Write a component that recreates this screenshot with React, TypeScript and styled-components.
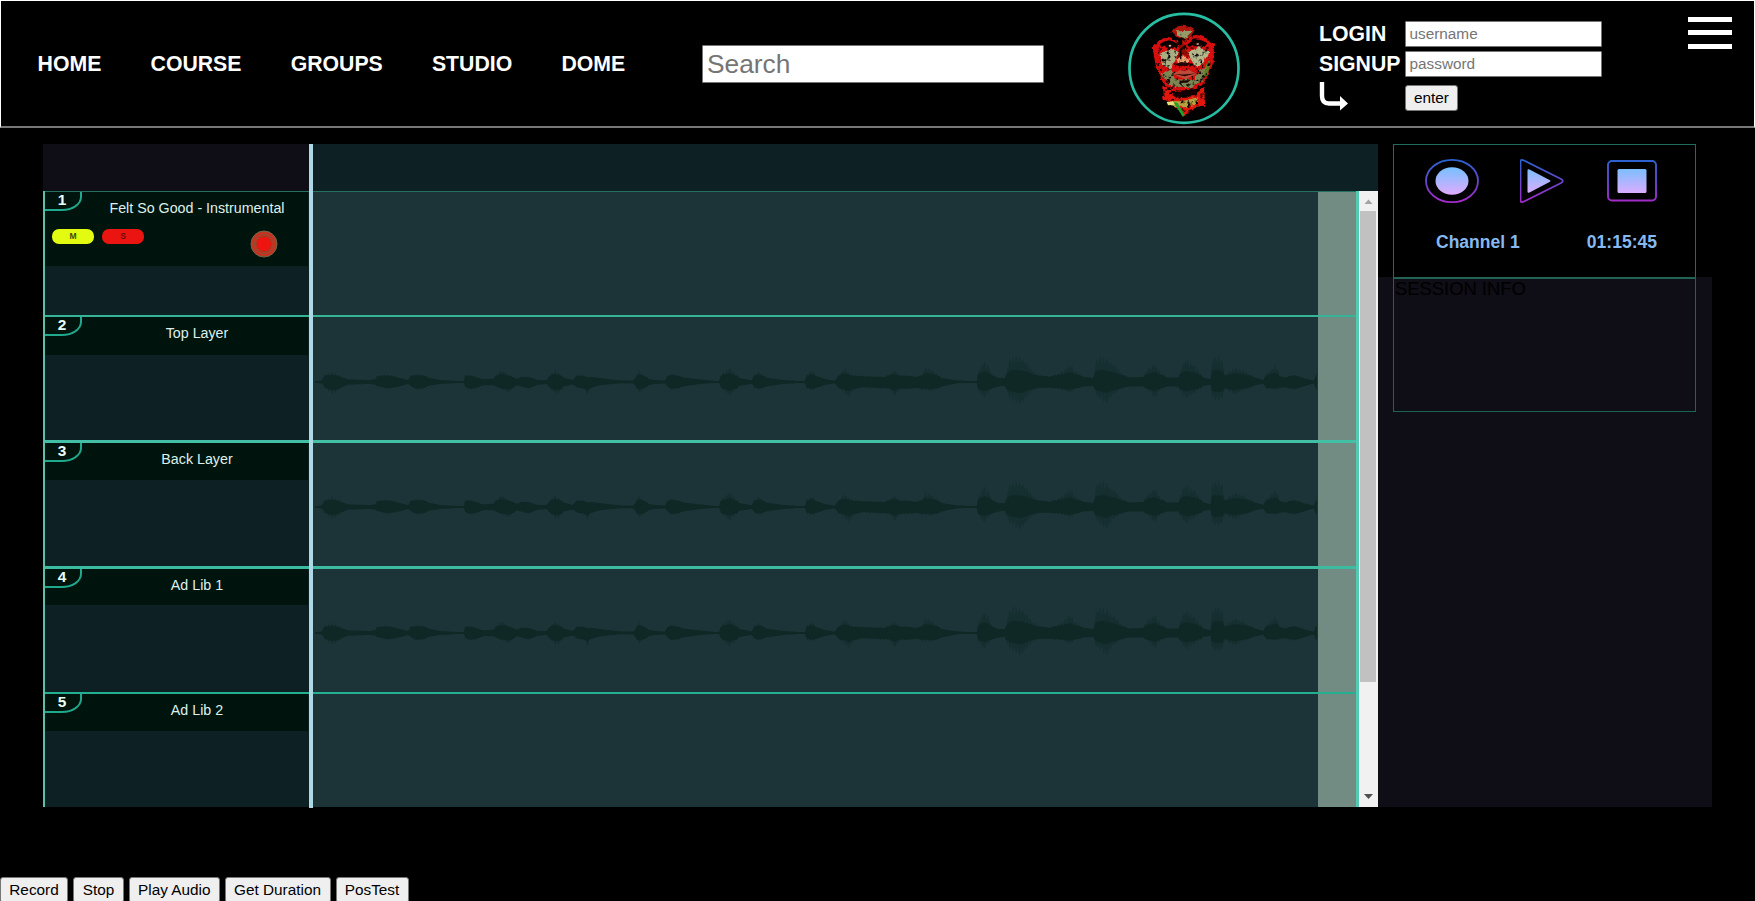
import React from "react";
import styled, { createGlobalStyle } from "styled-components";

const GlobalStyle = createGlobalStyle`
  html, body { margin: 0; background: #000; overflow: hidden; }
  body, input, button { font-family: "Liberation Sans", Arial, sans-serif; }
  * { box-sizing: border-box; }
`;

const Page = styled.div`
  width: 1755px;
  height: 901px;
  overflow: hidden;
  background: #000;
  display: flex;
  flex-direction: column;
`;

/* ---------- header ---------- */

const Header = styled.header`
  flex: none;
  height: 128px;
  border: 1px solid #fff;
  border-bottom: 2px solid #777;
  display: flex;
  align-items: flex-start;
`;

const Nav = styled.nav`
  display: flex;
  gap: 49.2px;
  width: 665px;
  padding: 51px 0 0 36.6px;
`;

const NavLink = styled.a`
  color: #fff;
  font-size: 21.25px;
  line-height: 25px;
  font-weight: bold;
  text-decoration: none;
  white-space: nowrap;
`;

const Field = styled.input`
  display: block;
  background: #fff;
  border: 1px solid #767676;
  border-radius: 1px;
  outline: none;
  color: #000;
  &::placeholder { color: #757575; opacity: 1; }
`;

const SearchField = styled(Field)`
  width: 342px;
  height: 38px;
  margin: 44px 0 0 36px;
  padding: 0 4px;
  font-size: 26.3px;
`;

const Portrait = styled.svg`
  flex: none;
  width: 112px;
  height: 113px;
  margin: 11px 0 0 84px;
`;

const Account = styled.form`
  display: grid;
  grid-template-columns: 86px 197px;
  grid-template-rows: 26px 26px 26px;
  row-gap: 4px;
  margin: 20px 0 0 79px;
`;

const AccountLabel = styled(NavLink)`
  line-height: 27px;
`;

const AccountField = styled(Field)`
  width: 197px;
  height: 26px;
  padding: 0 3.5px 1px;
  font-size: 15.33px;
`;

const ArrowIcon = styled.svg`
  width: 30px;
  height: 30px;
`;

const Button = styled.button`
  height: 26px;
  padding: 0 0 2px;
  border: 1px solid #767676;
  border-radius: 3px;
  background: #efefef;
  color: #000;
  font-size: 15.33px;
  line-height: 21px;
`;

const EnterButton = styled(Button)`
  width: 53px;
  margin-top: 4px;
`;

const Burger = styled.button`
  display: flex;
  flex-direction: column;
  gap: 8.3px;
  width: 44px;
  margin: 16px 0 0 86px;
  padding: 0;
  border: 0;
  background: none;
`;

const BurgerBar = styled.span`
  height: 5px;
  width: 44px;
  background: #fff;
`;

/* ---------- studio ---------- */

const Studio = styled.main`
  flex: none;
  position: relative;
  display: flex;
  width: 1669px;
  height: 663px;
  margin: 16px 0 0 43px;
  background: #0f0d15;
`;

const Workspace = styled.section`
  width: 1335px;
  display: flex;
  flex-direction: column;
`;

const Ruler = styled.div`
  flex: none;
  height: 47px;
  margin-left: 266px;
  background: #0d2124;
`;

const Scroller = styled.div`
  flex: 1;
  display: flex;
  min-height: 0;
`;

const Tracks = styled.div`
  width: 1316px;
  border-left: 2px solid #5cbfa8;
  border-right: 3px solid #55c8b2;
`;

const Track = styled.article<{ $height: number; $line: number; $color: string }>`
  display: flex;
  height: ${(p) => p.$height}px;
  border-top: ${(p) => p.$line}px solid ${(p) => p.$color};
`;

const TrackSide = styled.div`
  width: 264px;
  background: #0d2124;
`;

const TrackHead = styled.div<{ $height: number }>`
  display: grid;
  grid-template-columns: 41px 1fr;
  grid-template-rows: 31px 1fr;
  width: 263px;
  height: ${(p) => p.$height}px;
  background: #00140e;
`;

const Badge = styled.div`
  width: 37px;
  height: 19px;
  padding-right: 1px;
  border: solid #20a98c;
  border-width: 0 2px 2px 0;
  border-bottom-right-radius: 20px 14px;
  color: #eafff8;
  font-size: 15.4px;
  font-weight: bold;
  line-height: 15px;
  text-align: center;
`;

const TrackTitle = styled.div`
  width: 222px;
  color: #dff0ea;
  font-size: 14.25px;
  line-height: 32px;
  text-align: center;
`;

const Controls = styled.div`
  grid-column: 1 / 3;
  display: flex;
  align-items: flex-start;
  padding: 6px 0 0 7px;
`;

const Pill = styled.button<{ $fill: string; $ink: string }>`
  width: 42px;
  height: 15px;
  margin-right: 8px;
  padding: 0;
  border: 0;
  border-radius: 7px;
  background: ${(p) => p.$fill};
  color: ${(p) => p.$ink};
  font-size: 8.5px;
  font-weight: bold;
  line-height: 15px;
`;

const ArmIcon = styled.svg`
  width: 28px;
  height: 28px;
  margin: 1px 0 0 98px;
`;

const Lane = styled.div`
  display: flex;
  align-items: flex-start;
  width: 1009px;
  background: #1c3438;
`;

const Wave = styled.svg<{ $top: number }>`
  width: 1009px;
  height: 64px;
  margin-top: ${(p) => p.$top}px;
`;

const LaneTail = styled.div`
  width: 38px;
  background: #728b83;
`;

const Scrollbar = styled.div`
  display: flex;
  flex-direction: column;
  align-items: center;
  width: 19px;
  background: #f1f1f1;
`;

const ScrollArrow = styled.svg`
  flex: none;
  width: 17px;
  height: 20px;
`;

const ScrollThumb = styled.div`
  width: 16px;
  height: 471px;
  margin: 0 1px auto 0;
  background: #c1c1c1;
`;

const Playhead = styled.div`
  position: absolute;
  left: 266px;
  top: 0;
  width: 4px;
  height: 664px;
  background: #add8e6;
`;

const Aside = styled.aside`
  width: 334px;
`;

const TransportArea = styled.div`
  height: 133px;
  padding-left: 15px;
  background: #000;
`;

const Transport = styled.div`
  width: 303px;
  height: 134px;
  border: 1px solid #1f6d5c;
`;

const TransportButtons = styled.div`
  display: flex;
  justify-content: space-between;
  width: 233px;
  height: 73px;
  margin-left: 29.5px;
  padding-top: 13px;
`;

const TransportIcon = styled.svg<{ $w: number }>`
  width: ${(p) => p.$w}px;
  height: 46px;
`;

const Readout = styled.div`
  display: flex;
  justify-content: space-between;
  padding: 13px 38px 0 42px;
  color: #86b9f2;
  font-size: 17.55px;
  font-weight: bold;
  line-height: 22px;
`;

const SessionInfo = styled.div`
  width: 303px;
  height: 135px;
  margin-left: 15px;
  padding: 1px 0 0 1px;
  border: 1px solid #1c6556;
  border-top: 2px solid #216455;
  color: #000;
  font-size: 18.4px;
  line-height: 17px;
`;

const Footer = styled.footer`
  flex: none;
  display: flex;
  gap: 5px;
  margin-top: 70px;
`;

const FooterButton = styled(Button)<{ $w: number }>`
  flex: none;
  width: ${(p) => p.$w}px;
`;

/* ---------- waveform ---------- */

type Peak = [number, number, number];

const shift = (dx: number, peaks: Peak[]): Peak[] =>
  peaks.map(([x, up, down]) => [x / 3 + dx, up / 3, down / 3]);

const PEAKS: Peak[] = [
  ...shift(-13, [
    [45, 2, 2], [66, 5, 5], [72, 18, 14], [80, 26, 24], [95, 32, 38], [108, 26, 34], [122, 16, 18], [145, 8, 8],
    [210, 6, 6], [226, 8, 8], [230, 18, 12], [260, 24, 20], [290, 15, 16], [325, 6, 6], [332, 20, 12], [350, 26, 24],
    [370, 24, 22], [384, 14, 12], [420, 6, 6], [492, 2, 2], [496, 24, 16], [515, 20, 24], [550, 8, 10],
    [580, 10, 10], [600, 36, 20], [612, 34, 26], [625, 22, 34], [650, 10, 10], [665, 16, 14], [685, 16, 20],
    [715, 6, 8], [740, 6, 6], [752, 24, 22], [765, 38, 38], [778, 28, 36], [790, 14, 14], [818, 6, 8],
    [830, 20, 16], [850, 20, 22], [864, 14, 44], [870, 16, 20], [900, 12, 10], [960, 5, 4], [1000, 4, 4],
  ]),
  ...shift(327, [
    [-12, 14, 14], [-8, 34, 30], [0, 34, 34], [12, 20, 20], [30, 8, 8], [75, 4, 4], [82, 18, 12], [95, 28, 26],
    [130, 14, 14], [180, 8, 6], [238, 2, 2], [243, 26, 18], [256, 36, 32], [268, 46, 44], [280, 34, 32], [298, 12, 12],
    [335, 5, 6], [343, 22, 16], [355, 34, 24], [378, 14, 14], [430, 6, 6], [495, 2, 2], [500, 22, 18],
    [515, 38, 28], [530, 18, 18], [555, 9, 9], [585, 4, 4], [595, 20, 18], [612, 44, 34], [626, 30, 48],
    [645, 20, 24], [665, 18, 16], [735, 16, 20], [750, 26, 24], [765, 36, 46], [778, 22, 24], [800, 20, 24],
    [830, 16, 18], [848, 24, 26], [853, 50, 28], [880, 34, 28], [905, 12, 14], [950, 5, 4], [1008, 2, 2],
  ]),
  ...shift(657, [
    [21, 4, 4], [26, 40, 30], [42, 66, 50], [56, 52, 34], [66, 22, 20], [85, 12, 14], [105, 12, 12],
    [118, 70, 50], [130, 84, 60], [150, 76, 72], [175, 56, 42], [190, 34, 28], [205, 22, 18], [240, 16, 18],
    [270, 30, 22], [303, 58, 36], [315, 34, 22], [340, 16, 14], [370, 12, 12], [378, 66, 40], [392, 82, 54],
    [407, 76, 72], [430, 56, 40], [455, 28, 20], [475, 14, 14], [520, 16, 14], [532, 40, 24], [555, 58, 50],
    [572, 30, 22], [590, 14, 14], [625, 14, 14], [637, 58, 40], [652, 70, 52], [680, 46, 30], [700, 14, 12],
    [722, 8, 8], [727, 76, 54], [745, 82, 60], [757, 70, 52], [764, 22, 20], [792, 46, 42], [820, 38, 26],
    [850, 16, 12], [880, 6, 5], [890, 26, 20], [918, 54, 24], [930, 18, 18], [948, 14, 16], [970, 24, 26],
    [1000, 12, 14], [1032, 4, 4], [1038, 22, 22], [1043, 22, 22],
  ]),
];

const envelope = (level: number, base: number, rough: number) => {
  const up: string[] = [];
  const down: string[] = [];
  for (let i = 0; i < PEAKS.length - 1; i++) {
    const [x0, u0, d0] = PEAKS[i];
    const [x1, u1, d1] = PEAKS[i + 1];
    const steps = Math.max(1, Math.round((x1 - x0) / 0.8));
    for (let s = 0; s < steps; s++) {
      const t = s / steps;
      const x = x0 + (x1 - x0) * t;
      const wobble = 1 - rough * Math.abs(Math.sin(x * 2.7) * Math.cos(x * 0.9));
      const amp = (v: number) => Math.max(1, Math.min(v, base + v * level) * wobble);
      up.push(`${x.toFixed(1)},${(32 - amp(u0 + (u1 - u0) * t)).toFixed(1)}`);
      down.unshift(`${x.toFixed(1)},${(32 + amp(d0 + (d1 - d0) * t)).toFixed(1)}`);
    }
  }
  return [...up, ...down].join(" ");
};

const OUTER = envelope(1, 0, 0.35);
const CORE = envelope(0.3, 4.5, 0.12);

const Waveform = ({ top }: { top: number }) => (
  <Wave $top={top} viewBox="-4 0 1009 64">
    <polygon points={OUTER} fill="#112b29" opacity="0.55" />
    <polygon points={CORE} fill="#0f2825" />
  </Wave>
);

/* ---------- drawings ---------- */

const Face = () => (
  <Portrait viewBox="84 36 336 339">
    <defs>
      <filter id="ragged" x="-10%" y="-10%" width="120%" height="120%">
        <feTurbulence type="fractalNoise" baseFrequency="0.06" numOctaves="3" seed="4" />
        <feDisplacementMap in="SourceGraphic" scale="14" xChannelSelector="R" yChannelSelector="G" />
      </filter>
      <filter id="speckle" x="-10%" y="-10%" width="120%" height="120%">
        <feTurbulence type="fractalNoise" baseFrequency="0.08" numOctaves="4" seed="9" result="n" />
        <feColorMatrix in="n" type="matrix" values="0 0 0 0 0  0 0 0 0 0  0 0 0 0 0  5 0 0 0 -2.7" result="m" />
        <feComposite in="SourceGraphic" in2="m" operator="in" />
      </filter>
    </defs>
    <circle cx="252" cy="205" r="163.5" fill="#000" stroke="#26bda2" strokeWidth="8" />
    <g filter="url(#ragged)">
      <path d="M158 142 L176 122 L196 114 L228 118 L238 142 L250 116 L288 104 L322 116 L342 134 L341 190 L328 216 L316 246 L290 270 L258 278 L222 274 L190 250 L168 206Z" fill="#d8100b" />
      <path d="M214 94 Q244 62 284 90 L268 116 L240 118Z" fill="#b3120c" />
      <path d="M190 256 L222 280 L264 286 L312 262 L316 320 L284 322 L252 352 L222 312 L190 298Z" fill="#e3140b" />
      <path d="M210 274 L300 268 L290 288 L226 292Z" fill="#160100" />
      <path d="M224 94 L274 92 L262 112 L242 114Z" fill="#949a68" />
      <path d="M178 162 L214 146 L234 158 L222 186 L210 210 L186 190Z" fill="#a9ae83" />
      <path d="M264 156 L300 142 L326 154 L312 190 L288 202 L272 178Z" fill="#b3b58b" />
      <path d="M182 224 L214 206 L226 238 L282 240 L304 208 L328 194 L310 238 L274 262 L218 260Z" fill="#7d8552" />
      <path d="M228 174 L246 164 L270 178 L262 190 L234 190Z" fill="#e8a070" />
      <path d="M318 196 L330 172 L326 216 L308 238Z" fill="#5e7c22" />
      <path d="M198 302 L240 304 L298 292 L286 314 L252 322 L210 316Z" fill="#b5a043" />
      <path d="M238 140 L248 124 L256 150 L270 172 L246 162 L230 176Z" fill="#8e0a06" />
    </g>
    <g filter="url(#speckle)">
      <ellipse cx="252" cy="195" rx="92" ry="92" fill="#080200" />
      <path d="M186 250 H320 V345 H186Z" fill="#080200" />
    </g>
    <g>
      <path d="M180 132 Q206 110 234 134 L230 146 Q206 126 184 142Z" fill="#060000" />
      <path d="M262 134 Q290 106 322 130 L314 140 Q290 122 268 142Z" fill="#060000" />
      <ellipse cx="210" cy="137" rx="15" ry="7" fill="#160302" />
      <ellipse cx="292" cy="132" rx="15" ry="7" fill="#160302" />
      <path d="M226 192 L244 186 L272 190 L262 198 H234Z" fill="#250300" />
      <path d="M218 222 L240 210 L252 214 L266 209 L290 221 L256 238Z" fill="#bd4b3a" />
      <path d="M220 221 Q252 226 288 220 L254 229Z" fill="#280302" />
      <path d="M236 242 L272 240 L262 248 H244Z" fill="#1c0502" />
    </g>
    <path d="M220 306 L232 308 L254 344 L248 350Z" fill="#1fa32b" />
    <path d="M200 306 L220 304 L224 314 L204 316Z" fill="#eadd7c" />
    <ellipse cx="210" cy="137" rx="4" ry="3" fill="#c9b39c" />
    <ellipse cx="293" cy="132" rx="4" ry="3" fill="#b88f7c" />
  </Portrait>
);

const Gradients = () => (
  <defs>
    <linearGradient id="ring" x1="0" y1="0" x2="0" y2="46" gradientUnits="userSpaceOnUse">
      <stop offset="0.05" stopColor="#2b62d0" />
      <stop offset="0.95" stopColor="#a32bc9" />
    </linearGradient>
    <linearGradient id="core" x1="0" y1="9" x2="0" y2="37" gradientUnits="userSpaceOnUse">
      <stop offset="0" stopColor="#74c0ff" />
      <stop offset="1" stopColor="#e2abff" />
    </linearGradient>
  </defs>
);

const TRACKS = [
  { name: "Felt So Good - Instrumental", height: 124, line: 1, color: "#25705f", head: 74, wave: 0, controls: true },
  { name: "Top Layer", height: 125, line: 2, color: "#35b497", head: 38, wave: 33, controls: false },
  { name: "Back Layer", height: 126, line: 3, color: "#43bfa5", head: 37, wave: 32, controls: false },
  { name: "Ad Lib 1", height: 126, line: 3, color: "#3bbca1", head: 36, wave: 32, controls: false },
  { name: "Ad Lib 2", height: 115, line: 2, color: "#22b091", head: 37, wave: 0, controls: false },
];

export default function App() {
  return (
    <Page>
      <GlobalStyle />
      <Header>
        <Nav>
          {["HOME", "COURSE", "GROUPS", "STUDIO", "DOME"].map((label) => (
            <NavLink key={label}>{label}</NavLink>
          ))}
        </Nav>
        <SearchField placeholder="Search" />
        <Face />
        <Account>
          <AccountLabel>LOGIN</AccountLabel>
          <AccountField placeholder="username" />
          <AccountLabel>SIGNUP</AccountLabel>
          <AccountField placeholder="password" />
          <ArrowIcon viewBox="0 0 30 30">
            <path d="M3 1 V15 Q3 22.5 10 22.5 H22" fill="none" stroke="#fff" strokeWidth="4.4" />
            <path d="M21 15 L29 22.5 L21 29.5Z" fill="#fff" />
          </ArrowIcon>
          <EnterButton type="button">enter</EnterButton>
        </Account>
        <Burger aria-label="Menu">
          <BurgerBar />
          <BurgerBar />
          <BurgerBar />
        </Burger>
      </Header>

      <Studio>
        <Workspace>
          <Ruler />
          <Scroller>
            <Tracks>
              {TRACKS.map((t, i) => (
                <Track key={t.name} $height={t.height} $line={t.line} $color={t.color}>
                  <TrackSide>
                    <TrackHead $height={t.head}>
                      <Badge>{i + 1}</Badge>
                      <TrackTitle>{t.name}</TrackTitle>
                      {t.controls && (
                        <Controls>
                          <Pill $fill="#e2fb10" $ink="#3f4a08">M</Pill>
                          <Pill $fill="#ea1410" $ink="#6b0f0c">S</Pill>
                          <ArmIcon viewBox="0 0 28 28">
                            <circle cx="14" cy="14" r="13" fill="#c5321f" stroke="#6b6a4e" />
                            <circle cx="14" cy="14" r="9.5" fill="none" stroke="#8a5136" />
                            <circle cx="14" cy="14" r="7.5" fill="#ee1410" stroke="#a13a24" />
                          </ArmIcon>
                        </Controls>
                      )}
                    </TrackHead>
                  </TrackSide>
                  <Lane>{t.wave > 0 && <Waveform top={t.wave} />}</Lane>
                  <LaneTail />
                </Track>
              ))}
            </Tracks>
            <Scrollbar>
              <ScrollArrow viewBox="0 0 17 20">
                <path d="M4.5 13 L8.5 8.5 L12.5 13Z" fill="#a3a3a3" />
              </ScrollArrow>
              <ScrollThumb />
              <ScrollArrow viewBox="0 0 17 20">
                <path d="M4 7 L8.5 12 L13 7Z" fill="#505050" />
              </ScrollArrow>
            </Scrollbar>
          </Scroller>
        </Workspace>
        <Aside>
          <TransportArea>
            <Transport>
              <TransportButtons>
                <TransportIcon $w={56} viewBox="0 0 56 46">
                  <Gradients />
                  <ellipse cx="28" cy="23" rx="26" ry="21.2" fill="none" stroke="url(#ring)" strokeWidth="1.8" />
                  <ellipse cx="28" cy="23" rx="16.5" ry="13.7" fill="url(#core)" />
                </TransportIcon>
                <TransportIcon $w={46} viewBox="1.5 0 46 46">
                  <path d="M2 4 Q2 1 5 2.3 L43 21.3 Q45.5 23 43 24.7 L5 43.7 Q2 45 2 42Z" fill="none" stroke="url(#ring)" strokeWidth="1.8" />
                  <path d="M9 12.5 Q9 10.5 11 11.5 L31 22 Q33 23 31 24 L11 34.5 Q9 35.3 9 33.5Z" fill="url(#core)" />
                </TransportIcon>
                <TransportIcon $w={50} viewBox="-1 0 50 46">
                  <rect x="0" y="3" width="48" height="39.5" rx="4" fill="none" stroke="url(#ring)" strokeWidth="1.9" />
                  <rect x="9.5" y="11" width="29" height="24" rx="1.5" fill="url(#core)" />
                </TransportIcon>
              </TransportButtons>
              <Readout>
                <span>Channel 1</span>
                <span>01:15:45</span>
              </Readout>
            </Transport>
          </TransportArea>
          <SessionInfo>SESSION INFO</SessionInfo>
        </Aside>
        <Playhead />
      </Studio>

      <Footer>
        <FooterButton $w={68}>Record</FooterButton>
        <FooterButton $w={51}>Stop</FooterButton>
        <FooterButton $w={90.5}>Play Audio</FooterButton>
        <FooterButton $w={106}>Get Duration</FooterButton>
        <FooterButton $w={73}>PosTest</FooterButton>
      </Footer>
    </Page>
  );
}
